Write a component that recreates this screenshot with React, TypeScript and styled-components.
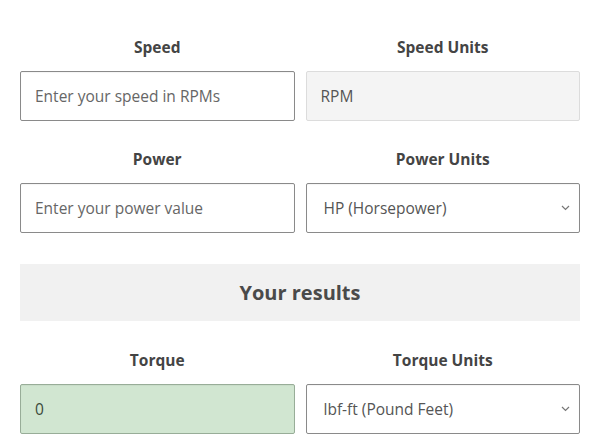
import React from "react";
import styled, { createGlobalStyle } from "styled-components";

const Global = createGlobalStyle`
  html, body { margin: 0; padding: 0; background: #fff; }
  body { font-family: "Open Sans", "Noto Sans", sans-serif; }
  * { box-sizing: border-box; }
`;

const Page = styled.div`
  padding: 36px 20px 0 20px;
  display: flex;
  flex-direction: column;
`;

const Row = styled.div<{ $mb: number }>`
  display: grid;
  grid-template-columns: 1fr 1fr;
  column-gap: 11px;
  margin-bottom: ${(p) => p.$mb}px;
`;

const Field = styled.div`
  display: flex;
  flex-direction: column;
`;

const Label = styled.div`
  text-align: center;
  font-weight: 700;
  font-size: 15.5px;
  line-height: 22px;
  color: #444;
  margin-bottom: 13px;
`;

const Box = styled.div<{ $variant?: "plain" | "readonly" | "result" }>`
  height: 50px;
  display: flex;
  align-items: center;
  justify-content: space-between;
  padding: 0 9px 0 14px;
  font-size: 15.5px;
  border-radius: 2px;
  color: ${(p) => (p.$variant === "result" ? "#3b4a3b" : "#555")};
  background: ${(p) =>
    p.$variant === "readonly" ? "#f4f4f4" : p.$variant === "result" ? "#d1e6d1" : "#fff"};
  border: 1px solid
    ${(p) =>
      p.$variant === "readonly" ? "#dcdcdc" : p.$variant === "result" ? "#98ad98" : "#8a8a8a"};
  box-shadow: ${(p) => (p.$variant === "readonly" ? "none" : "inset 0 1px 1px rgba(0,0,0,0.04)")};
`;

const Placeholder = styled.span`
  color: #666;
`;

const Value = styled.span<{ $pad?: number }>`
  padding-left: ${(p) => p.$pad ?? 0}px;
`;

const Results = styled.div`
  height: 57px;
  background: #f1f1f1;
  display: flex;
  align-items: center;
  justify-content: center;
  font-weight: 700;
  font-size: 20px;
  color: #4a4a4a;
  margin-bottom: 28px;
`;

const Chevron = () => (
  <svg width="9" height="6" viewBox="0 0 9 6" fill="none">
    <path d="M1 1l3.5 3.5L8 1" stroke="#777" strokeWidth="1.2" />
  </svg>
);

export default function App() {
  return (
    <>
      <Global />
      <Page>
        <Row $mb={27}>
          <Field>
            <Label>Speed</Label>
            <Box>
              <Placeholder>Enter your speed in RPMs</Placeholder>
            </Box>
          </Field>
          <Field>
            <Label>Speed Units</Label>
            <Box $variant="readonly">
              <Value>RPM</Value>
            </Box>
          </Field>
        </Row>
        <Row $mb={31}>
          <Field>
            <Label>Power</Label>
            <Box>
              <Placeholder>Enter your power value</Placeholder>
            </Box>
          </Field>
          <Field>
            <Label>Power Units</Label>
            <Box>
              <Value $pad={3}>HP (Horsepower)</Value>
              <Chevron />
            </Box>
          </Field>
        </Row>
        <Results>Your results</Results>
        <Row $mb={0}>
          <Field>
            <Label>Torque</Label>
            <Box $variant="result">
              <Value>0</Value>
            </Box>
          </Field>
          <Field>
            <Label>Torque Units</Label>
            <Box>
              <Value $pad={3}>lbf-ft (Pound Feet)</Value>
              <Chevron />
            </Box>
          </Field>
        </Row>
      </Page>
    </>
  );
}
